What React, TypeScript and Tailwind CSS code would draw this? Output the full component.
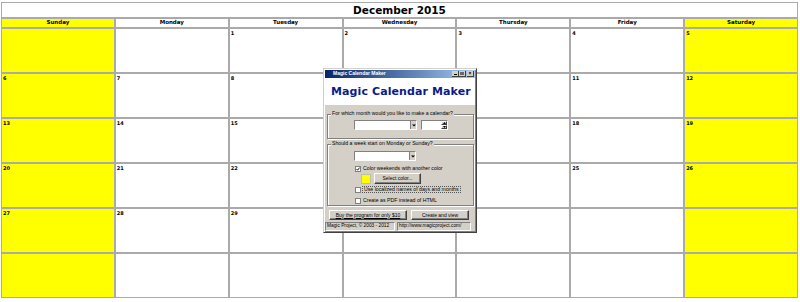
import React from "react";

const days = ["Sunday", "Monday", "Tuesday", "Wednesday", "Thursday", "Friday", "Saturday"];

// December 2015 starts on a Tuesday, six weeks shown
const cells: (number | null)[] = [null, null];
for (let d = 1; d <= 31; d++) cells.push(d);
while (cells.length < 42) cells.push(null);

const Check = ({ checked = false }: { checked?: boolean }) => (
  <svg width="6" height="6" viewBox="0 0 6 6" className="shrink-0">
    <rect x="0.5" y="0.5" width="5" height="5" fill="#fff" stroke="#808080" />
    {checked && <path d="M1.5 3 L2.6 4.2 L4.6 1.6" fill="none" stroke="#000" strokeWidth="0.9" />}
  </svg>
);

const Combo = ({ w }: { w: string }) => (
  <div className={`${w} h-[10px] bg-white border border-t-[#808080] border-l-[#808080] border-b-white border-r-white flex justify-end`}>
    <div className="w-[6px] h-full bg-[#d4d0c8] border-l border-[#808080] flex items-center justify-center">
      <svg width="4" height="3" viewBox="0 0 4 3">
        <path d="M0 0.5 H4 L2 2.5 Z" fill="#000" />
      </svg>
    </div>
  </div>
);

const Btn = ({ children, w, h = "h-[10px]", underline = false }: { children: React.ReactNode; w: string; h?: string; underline?: boolean }) => (
  <div
    className={`${w} ${h} shrink-0 bg-[#d4d0c8] border border-t-white border-l-white border-r-[#404040] border-b-[#404040] shadow-[inset_-1px_-1px_0_#808080] flex items-center justify-center overflow-hidden text-[5px] leading-none text-black whitespace-nowrap`}
  >
    <span className={underline ? "underline" : ""}>{children}</span>
  </div>
);

const Dialog = () => (
  <div
    className="absolute left-[323px] top-[68px] w-[154px] h-[165px] bg-[#d4d0c8] border border-t-[#d4d0c8] border-l-[#d4d0c8] border-r-[#404040] border-b-[#404040] shadow-[inset_1px_1px_0_#fff,inset_-1px_-1px_0_#808080] p-[1px] flex flex-col"
    style={{ fontFamily: '"Liberation Sans", Arial, sans-serif' }}
  >
    {/* title bar */}
    <div className="h-[8px] bg-gradient-to-r from-[#0a246a] to-[#a6caf0] flex items-center justify-between pl-[8px] pr-[1px]">
      <span className="text-[5px] font-bold text-white leading-none">Magic Calendar Maker</span>
      <div className="flex items-center gap-[1px]">
        <div className="flex">
          <div className="w-[7px] h-[6px] bg-[#d4d0c8] border-r border-b border-[#404040] flex items-end justify-center pb-[1px]">
            <div className="w-[3px] h-[1px] bg-black" />
          </div>
          <div className="w-[7px] h-[6px] bg-[#d4d0c8] border-r border-b border-[#404040] flex items-center justify-center">
            <div className="w-[4px] h-[3px] border border-t-2 border-black opacity-50" />
          </div>
        </div>
        <div className="w-[7px] h-[6px] bg-[#d4d0c8] border-r border-b border-[#404040] flex items-center justify-center text-[5px] leading-none font-bold">
          ×
        </div>
      </div>
    </div>

    {/* banner */}
    <div className="h-[28px] bg-white flex items-center pl-[6px]">
      <span
        className="text-[11px] font-bold text-[#0c1a8c] leading-none tracking-[0.1px]"
        style={{ fontFamily: '"DejaVu Sans", Verdana, sans-serif' }}
      >
        Magic Calendar Maker
      </span>
    </div>

    {/* group 1 */}
    <div className="relative mt-[9px] ml-[2px] mr-[1px] h-[25px] border border-[#808080] shadow-[inset_1px_1px_0_#fff,1px_1px_0_#fff] pt-[5px] pl-[26px] flex items-start gap-[4px]">
      <span className="absolute -top-[4px] left-[3px] bg-[#d4d0c8] px-[1px] text-[5.2px] leading-none text-black">
        For which month would you like to make a calendar?
      </span>
      <Combo w="w-[63px]" />
      <div className="w-[27px] h-[10px] bg-white border border-t-[#808080] border-l-[#808080] border-b-white border-r-white flex justify-end">
        <div className="w-[6px] h-full flex flex-col">
          <div className="flex-1 bg-[#d4d0c8] border border-t-white border-l-white border-r-[#404040] border-b-[#404040] flex items-center justify-center">
            <svg width="3" height="2" viewBox="0 0 3 2"><path d="M0 2 H3 L1.5 0 Z" fill="#000" /></svg>
          </div>
          <div className="flex-1 bg-[#d4d0c8] border border-t-white border-l-white border-r-[#404040] border-b-[#404040] flex items-center justify-center">
            <svg width="3" height="2" viewBox="0 0 3 2"><path d="M0 0 H3 L1.5 2 Z" fill="#000" /></svg>
          </div>
        </div>
      </div>
    </div>

    {/* group 2 */}
    <div className="relative mt-[5px] ml-[2px] mr-[1px] h-[63px] border border-[#808080] shadow-[inset_1px_1px_0_#fff,1px_1px_0_#fff] pt-[6px] pl-[26px] flex flex-col items-start text-[5.2px] leading-none text-black">
      <span className="absolute -top-[4px] left-[3px] bg-[#d4d0c8] px-[1px]">
        Should a week start on Monday or Sunday?
      </span>
      <Combo w="w-[62px]" />
      <div className="mt-[4px] ml-[1px] flex items-center gap-[1px] h-[7px]">
        <Check checked />
        <span className="px-[1px]">Color weekends with another color</span>
      </div>
      <div className="mt-[1px] ml-[7px] flex items-center gap-[3px]">
        <div className="w-[10px] h-[10px] bg-[#ffff00] border border-[#c0c0a0]" />
        <Btn w="w-[47px]" h="h-[11px]">Select color...</Btn>
      </div>
      <div className="mt-[2px] ml-[1px] flex items-center gap-[1px] h-[7px]">
        <Check />
        <span className="h-[7px] flex items-center px-[1px] border border-dotted border-[#555]">
          Use localized names of days and months
        </span>
      </div>
      <div className="mt-[4px] ml-[1px] flex items-center gap-[1px] h-[7px]">
        <Check />
        <span className="px-[1px]">Create as PDF instead of HTML</span>
      </div>
    </div>

    {/* buttons */}
    <div className="mt-[4px] ml-[4px] flex gap-[4px]">
      <Btn w="w-[78px]" underline>
        Buy the program for only $10
      </Btn>
      <Btn w="w-[58px]">Create and view</Btn>
    </div>

    {/* status bar */}
    <div className="mt-[2px] flex gap-[2px] text-[4.8px] leading-none text-black">
      <div className="w-[70px] h-[9px] border border-t-[#808080] border-l-[#808080] border-b-white border-r-white flex items-center pl-[1px]">
        Magic Project, © 2003 - 2012
      </div>
      <div className="w-[74px] h-[9px] border border-t-[#808080] border-l-[#808080] border-b-white border-r-white flex items-center pl-[1px]">
        http://www.magicproject.com/
      </div>
    </div>
  </div>
);

export default function App() {
  return (
    <div
      className="relative w-[800px] h-[302px] bg-white overflow-hidden text-black"
      style={{ fontFamily: '"DejaVu Sans", Verdana, sans-serif' }}
    >
      <div className="ml-[1px] mt-[2px] w-[797px] bg-[#aaaaaa] p-[1px] flex flex-col gap-[2px]">
        <div className="h-[14px] bg-white flex items-center justify-center text-[10.5px] font-bold leading-none">
          December 2015
        </div>
        <div className="grid grid-cols-7 gap-[2px]">
          {days.map((d, i) => (
            <div
              key={d}
              className={`h-[8px] flex items-center justify-center text-[5.5px] font-bold leading-none ${
                i === 0 || i === 6 ? "bg-[#ffff00]" : "bg-white"
              }`}
            >
              {d}
            </div>
          ))}
        </div>
        <div className="grid grid-cols-7 auto-rows-[43px] gap-[2px]">
          {cells.map((c, i) => (
            <div
              key={i}
              className={`pl-[1px] pt-[2px] text-[5px] font-bold leading-none ${
                i % 7 === 0 || i % 7 === 6 ? "bg-[#ffff00]" : "bg-white"
              }`}
            >
              {c ?? ""}
            </div>
          ))}
        </div>
      </div>
      <Dialog />
    </div>
  );
}
